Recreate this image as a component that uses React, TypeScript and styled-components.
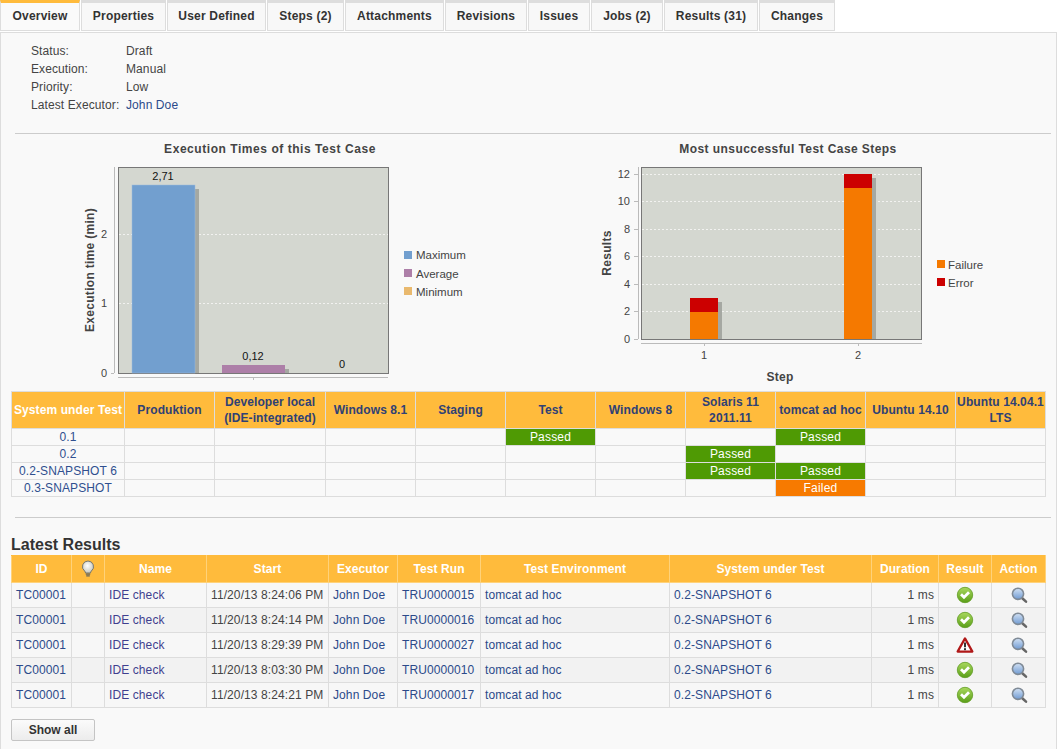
import React from "react";
import styled, { createGlobalStyle } from "styled-components";

const Global = createGlobalStyle`
  html, body { margin: 0; padding: 0; background: #fff; overflow: hidden; }
  body { font-family: "Liberation Sans", Arial, sans-serif; font-size: 12px; color: #333; letter-spacing: 0.1px; }
`;

const Page = styled.div`
  width: 1057px;
  height: 749px;
  overflow: hidden;
`;

const TabBar = styled.div`
  display: flex;
  height: 31px;
  gap: 1px;
`;

const Tab = styled.div<{ $w: number; $active?: boolean }>`
  box-sizing: border-box;
  width: ${(p) => p.$w}px;
  height: 31px;
  border: 1px solid #ddd;
  border-top: 3px solid ${(p) => (p.$active ? "#ffbb3c" : "#ddd")};
  background: ${(p) => (p.$active ? "#fafafa" : "#f8f8f8")};
  font-weight: bold;
  font-size: 12px;
  letter-spacing: 0.2px;
  line-height: 26px;
  text-align: center;
  color: #333;
`;

const Panel = styled.div`
  box-sizing: border-box;
  margin-top: 1px;
  height: 717px;
  border: 1px solid #ddd;
  border-bottom: none;
  background: #f9f9f9;
  padding: 9px 0 0 10px;
`;

const Props = styled.dl`
  display: grid;
  grid-template-columns: 95px auto;
  grid-auto-rows: 18px;
  margin: 0 0 0 20px;
  line-height: 18px;
  height: 91px;
`;

const PropLabel = styled.dt`
  margin: 0;
  color: #444;
`;

const PropValue = styled.dd<{ $link?: boolean }>`
  margin: 0;
  color: ${(p) => (p.$link ? "#2b4a8a" : "#444")};
`;

const Rule = styled.hr<{ $gap?: number }>`
  border: 0;
  border-top: 1px solid #ccc;
  margin: ${(p) => p.$gap ?? 0}px 0 0 4px;
  width: 1036px;
  height: 0;
`;

const ChartRow = styled.div`
  display: flex;
  height: 256px;
  margin-left: 59px;
  margin-top: 1px;
  gap: 100px;
`;

const ChartSvg = styled.svg`
  display: block;
  width: 420px;
  height: 255px;
  font-family: "Liberation Sans", Arial, sans-serif;
  letter-spacing: 0;
`;

const Grid = styled.table`
  border-collapse: collapse;
  table-layout: fixed;
  width: 1034px;
  font-size: 12px;
`;

const MatrixHead = styled.th<{ $first?: boolean }>`
  background: #ffbb3c;
  border: 1px solid #ddd;
  color: ${(p) => (p.$first ? "#fff" : "#2f4175")};
  font-weight: bold;
  height: 36px;
  padding: 0 1px;
  line-height: 16px;
  text-align: center;
`;

const MatrixRowHead = styled.td`
  border: 1px solid #ddd;
  color: #2f4f8f;
  text-align: center;
  height: 16px;
  padding: 0;
  line-height: 16px;
`;

const MatrixCell = styled.td<{ $s?: string }>`
  border: 1px solid #ddd;
  text-align: center;
  height: 16px;
  padding: 0;
  line-height: 16px;
  letter-spacing: 0.2px;
  color: #fff;
  background: ${(p) => (p.$s === "Passed" ? "#4f9a04" : p.$s === "Failed" ? "#f77a00" : "transparent")};
`;

const Heading = styled.h2`
  margin: 17px 0 0 0;
  font-size: 16px;
  line-height: 20px;
  color: #333;
  font-weight: bold;
  letter-spacing: 0;
`;

const ResultsHead = styled.th`
  box-sizing: border-box;
  background: #ffbb3c;
  border: 1px solid #ffd27a;
  border-top-color: #ffbb3c;
  color: #fff;
  font-weight: bold;
  height: 27px;
  padding: 0;
  text-align: center;
  line-height: 14px;
`;

const ResultsRow = styled.tr<{ $alt?: boolean }>`
  background: ${(p) => (p.$alt ? "#f2f2f2" : "#f7f7f7")};
`;

const ResultsCell = styled.td<{ $color?: string; $align?: string; $raise?: boolean }>`
  box-sizing: border-box;
  border: 1px solid #ddd;
  height: 25px;
  padding: ${(p) => (p.$raise ? "0 4px 1px" : "0 4px")};
  color: ${(p) => p.$color ?? "#2b4a8a"};
  text-align: ${(p) => p.$align ?? "left"};
  line-height: 14px;
  white-space: nowrap;
  overflow: hidden;
  vertical-align: middle;
`;

const IconBox = styled.span`
  display: flex;
  justify-content: center;
  align-items: center;
`;

const ShowAll = styled.button`
  display: block;
  box-sizing: border-box;
  width: 84px;
  height: 22px;
  margin-top: 11px;
  padding: 0;
  border: 1px solid #c4c4c4;
  border-radius: 2px;
  background: linear-gradient(#fbfbfb, #ececec);
  font: bold 12px "Liberation Sans", Arial, sans-serif;
  color: #333;
`;

const Check = () => (
  <svg width="18" height="18" viewBox="0 0 18 18">
    <defs>
      <linearGradient id="chk" x1="0" y1="0" x2="0" y2="1">
        <stop offset="0" stopColor="#a9d85e" />
        <stop offset="1" stopColor="#5a9e18" />
      </linearGradient>
    </defs>
    <circle cx="9" cy="9" r="7.7" fill="url(#chk)" stroke="#5f9c22" strokeWidth="0.8" />
    <path d="M5 8.2 8 11.2 13 6.2" fill="none" stroke="#fff" strokeWidth="2.8" />
  </svg>
);

const Warn = () => (
  <svg width="18" height="18" viewBox="0 0 18 18">
    <path d="M9 2.4 16.4 15.6H1.6Z" fill="#fff" stroke="#b01818" strokeWidth="2.2" strokeLinejoin="round" />
    <path d="M9 6.4v4.8" stroke="#333" strokeWidth="2" />
    <rect x="8" y="12.2" width="2" height="2" fill="#333" />
  </svg>
);

const Lens = () => (
  <svg width="18" height="18" viewBox="0 0 18 18">
    <defs>
      <linearGradient id="lens" x1="0" y1="0" x2="0" y2="1">
        <stop offset="0" stopColor="#d3e2f4" />
        <stop offset="1" stopColor="#6f9ad2" />
      </linearGradient>
    </defs>
    <path d="M12 12 16 15.6" stroke="#666" strokeWidth="2.6" strokeLinecap="round" />
    <circle cx="8" cy="7.8" r="5.6" fill="url(#lens)" stroke="#7f8a96" strokeWidth="1.6" />
  </svg>
);

const Bulb = () => (
  <svg width="14" height="18" viewBox="0 0 14 18">
    <defs>
      <radialGradient id="bulb" cx="0.45" cy="0.4" r="0.6">
        <stop offset="0" stopColor="#ffffff" />
        <stop offset="1" stopColor="#c9c8bc" />
      </radialGradient>
    </defs>
    <path d="M7 1a5.6 5.6 0 0 0-3.4 10c.7.6.9 1.4.9 2h5c0-.6.2-1.4.9-2A5.6 5.6 0 0 0 7 1Z" fill="url(#bulb)" stroke="#77776e" strokeWidth="1" />
    <path d="M4.8 14.2h4.4M5.2 15.8h3.6" stroke="#66665c" strokeWidth="1.2" />
  </svg>
);

const TITLE = { fontSize: 12, fontWeight: 700, fill: "#444" };
const AXIS = { fontSize: 12, fontWeight: 700, fill: "#444", letterSpacing: 0.3 };
const TICK = { fontSize: 11, fill: "#444" };
const LEGEND = { fontSize: 11.5, fill: "#444" };
const VALUE = { fontSize: 11, fill: "#111" };

const ExecutionChart = () => (
  <ChartSvg viewBox="0 0 420 255">
    <text x="200" y="18" textAnchor="middle" letterSpacing="0.55" {...TITLE}>Execution Times of this Test Case</text>
    <rect x="48.5" y="32.5" width="270" height="206" fill="#d4d7d0" stroke="#777" />
    <path d="M49 99.5H318M49 168.5H318" stroke="#f2f2f0" strokeDasharray="2 2" />
    <rect x="125" y="54" width="4" height="184" fill="#a5a8a2" />
    <rect x="62" y="50" width="63" height="188" fill="#729fcf" stroke="#9dbbdc" strokeWidth="0.5" />
    <rect x="215" y="234" width="4" height="4" fill="#a5a8a2" />
    <rect x="152" y="230" width="63" height="8" fill="#ad7fa8" />
    <text x="93" y="45" textAnchor="middle" {...VALUE}>2,71</text>
    <text x="183" y="225" textAnchor="middle" {...VALUE}>0,12</text>
    <text x="272" y="233" textAnchor="middle" {...VALUE}>0</text>
    <path d="M44.5 32V238M41 238.5H44" stroke="#bbb" />
    <text x="37" y="103" textAnchor="end" {...TICK}>2</text>
    <text x="37" y="172" textAnchor="end" {...TICK}>1</text>
    <text x="37" y="242" textAnchor="end" {...TICK}>0</text>
    <path d="M48 242.5H318M183.5 242V245" stroke="#bbb" />
    <text transform="translate(24 135) rotate(-90)" textAnchor="middle" {...AXIS}>Execution time (min)</text>
    <rect x="334" y="116" width="8" height="8" fill="#729fcf" />
    <rect x="334" y="134" width="8" height="8" fill="#ad7fa8" />
    <rect x="334" y="152" width="8" height="8" fill="#e9b96e" />
    <text x="346" y="123.5" {...LEGEND}>Maximum</text>
    <text x="346" y="143" {...LEGEND}>Average</text>
    <text x="346" y="161" {...LEGEND}>Minimum</text>
  </ChartSvg>
);

const StepsChart = () => (
  <ChartSvg viewBox="0 0 420 255">
    <text x="198" y="18" textAnchor="middle" letterSpacing="0.43" {...TITLE}>Most unsuccessful Test Case Steps</text>
    <rect x="51.5" y="32.5" width="280" height="172" fill="#d4d7d0" stroke="#777" />
    <path d="M52 39.5H331M52 66.5H331M52 94.5H331M52 121.5H331M52 149.5H331M52 176.5H331" stroke="#f2f2f0" strokeDasharray="2 2" />
    <rect x="128" y="167" width="4" height="37" fill="#a5a8a2" />
    <rect x="100" y="163" width="28" height="14" fill="#cc0000" />
    <rect x="100" y="177" width="28" height="27" fill="#f57900" />
    <rect x="282" y="43" width="4" height="161" fill="#a5a8a2" />
    <rect x="254" y="39" width="28" height="14" fill="#cc0000" />
    <rect x="254" y="53" width="28" height="151" fill="#f57900" />
    <path d="M48.5 32V204M44 39.5H48M44 66.5H48M44 94.5H48M44 121.5H48M44 149.5H48M44 176.5H48M44 204.5H48" stroke="#bbb" />
    {[["12", 43], ["10", 70], ["8", 98], ["6", 125], ["4", 153], ["2", 180], ["0", 208]].map(([t, y]) => (
      <text key={t} x="40" y={y} textAnchor="end" {...TICK}>{t}</text>
    ))}
    <path d="M51 208.5H332M114.5 208V211M268.5 208V211" stroke="#bbb" />
    <text x="114" y="224" textAnchor="middle" {...TICK}>1</text>
    <text x="268" y="224" textAnchor="middle" {...TICK}>2</text>
    <text x="190" y="246" textAnchor="middle" {...AXIS}>Step</text>
    <text transform="translate(21 118) rotate(-90)" textAnchor="middle" {...AXIS}>Results</text>
    <rect x="347" y="125" width="8" height="8" fill="#f57900" />
    <rect x="347" y="143" width="8" height="8" fill="#cc0000" />
    <text x="358" y="133.5" {...LEGEND}>Failure</text>
    <text x="358" y="152" {...LEGEND}>Error</text>
  </ChartSvg>
);

const matrixCols = [113, 90, 111, 90, 90, 90, 90, 90, 90, 90, 90];
const matrixHeads = ["System under Test", "Produktion", "Developer local (IDE-integrated)", "Windows 8.1", "Staging", "Test", "Windows 8", "Solaris 11 2011.11", "tomcat ad hoc", "Ubuntu 14.10", "Ubuntu 14.04.1 LTS"];
const matrixRows: [string, Record<number, string>][] = [
  ["0.1", { 5: "Passed", 8: "Passed" }],
  ["0.2", { 7: "Passed" }],
  ["0.2-SNAPSHOT 6", { 7: "Passed", 8: "Passed" }],
  ["0.3-SNAPSHOT", { 8: "Failed" }],
];

const resultCols = [60, 33, 102, 122, 69, 83, 189, 202, 67, 53, 54];
const resultHeads = ["ID", "", "Name", "Start", "Executor", "Test Run", "Test Environment", "System under Test", "Duration", "Result", "Action"];
const results = [
  ["8:24:06 PM", "TRU0000015", true],
  ["8:24:14 PM", "TRU0000016", true],
  ["8:29:39 PM", "TRU0000027", false],
  ["8:03:30 PM", "TRU0000010", true],
  ["8:24:21 PM", "TRU0000017", true],
] as const;

const tabs: [string, number][] = [
  ["Overview", 80], ["Properties", 85], ["User Defined", 99], ["Steps (2)", 77], ["Attachments", 99],
  ["Revisions", 82], ["Issues", 62], ["Jobs (2)", 72], ["Results (31)", 94], ["Changes", 76],
];

const props: [string, string, boolean?][] = [
  ["Status:", "Draft"], ["Execution:", "Manual"], ["Priority:", "Low"], ["Latest Executor:", "John Doe", true],
];

export default function App() {
  return (
    <Page>
      <Global />
      <TabBar>
        {tabs.map(([t, w], i) => (
          <Tab key={t} $w={w} $active={i === 0}>{t}</Tab>
        ))}
      </TabBar>
      <Panel>
        <Props>
          {props.map(([l, v, link]) => (
            <React.Fragment key={l}>
              <PropLabel>{l}</PropLabel>
              <PropValue $link={link}>{v}</PropValue>
            </React.Fragment>
          ))}
        </Props>
        <Rule />
        <ChartRow>
          <ExecutionChart />
          <StepsChart />
        </ChartRow>
        <Grid>
          <colgroup>
            {matrixCols.map((w, i) => <col key={i} width={w} />)}
          </colgroup>
          <thead>
            <tr>
              {matrixHeads.map((h, i) => <MatrixHead key={h} $first={i === 0}>{h}</MatrixHead>)}
            </tr>
          </thead>
          <tbody>
            {matrixRows.map(([name, cells]) => (
              <tr key={name}>
                <MatrixRowHead>{name}</MatrixRowHead>
                {matrixCols.slice(1).map((_, i) => (
                  <MatrixCell key={i} $s={cells[i + 1]}>{cells[i + 1]}</MatrixCell>
                ))}
              </tr>
            ))}
          </tbody>
        </Grid>
        <Rule $gap={20} />
        <Heading>Latest Results</Heading>
        <Grid>
          <colgroup>
            {resultCols.map((w, i) => <col key={i} width={w} />)}
          </colgroup>
          <thead>
            <tr>
              {resultHeads.map((h, i) => (
                <ResultsHead key={i}>{i === 1 ? <IconBox><Bulb /></IconBox> : h}</ResultsHead>
              ))}
            </tr>
          </thead>
          <tbody>
            {results.map(([time, run, ok], i) => (
              <ResultsRow key={run} $alt={i % 2 === 1}>
                <ResultsCell $raise>TC00001</ResultsCell>
                <ResultsCell />
                <ResultsCell $color="#3f3f8f">IDE check</ResultsCell>
                <ResultsCell $color="#444">11/20/13 {time}</ResultsCell>
                <ResultsCell>John Doe</ResultsCell>
                <ResultsCell>{run}</ResultsCell>
                <ResultsCell>tomcat ad hoc</ResultsCell>
                <ResultsCell>0.2-SNAPSHOT 6</ResultsCell>
                <ResultsCell $color="#444" $align="right">1 ms</ResultsCell>
                <ResultsCell $align="center"><IconBox>{ok ? <Check /> : <Warn />}</IconBox></ResultsCell>
                <ResultsCell $align="center"><IconBox><Lens /></IconBox></ResultsCell>
              </ResultsRow>
            ))}
          </tbody>
        </Grid>
        <ShowAll>Show all</ShowAll>
      </Panel>
    </Page>
  );
}
